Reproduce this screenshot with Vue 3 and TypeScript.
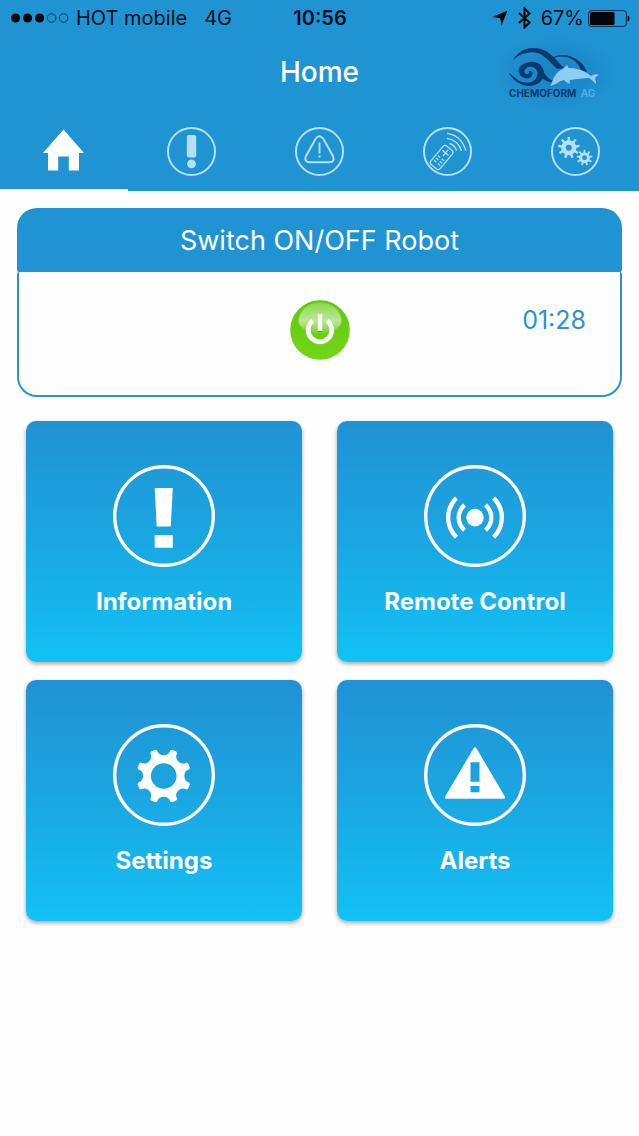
<script setup lang="ts">
import { ref } from 'vue'

type TabId = 'home' | 'info' | 'alerts' | 'remote' | 'settings'
type TileId = 'info' | 'remote' | 'settings' | 'alerts'

const tabs: { id: TabId; label: string }[] = [
  { id: 'home', label: 'Home' },
  { id: 'info', label: 'Information' },
  { id: 'alerts', label: 'Alerts' },
  { id: 'remote', label: 'Remote Control' },
  { id: 'settings', label: 'Settings' },
]

const tiles: { id: TileId; label: string }[] = [
  { id: 'info', label: 'Information' },
  { id: 'remote', label: 'Remote Control' },
  { id: 'settings', label: 'Settings' },
  { id: 'alerts', label: 'Alerts' },
]

const activeTab = ref<TabId>('home')
const robotOn = ref(true)

function polar(cx: number, cy: number, r: number, deg: number): string {
  const a = (deg * Math.PI) / 180
  return `${(cx + r * Math.cos(a)).toFixed(2)} ${(cy + r * Math.sin(a)).toFixed(2)}`
}

function hole(cx: number, cy: number, r: number): string {
  return `M${cx - r} ${cy}a${r} ${r} 0 1 0 ${2 * r} 0a${r} ${r} 0 1 0 ${-2 * r} 0Z`
}

/* Cog with square teeth */
function cog(cx: number, cy: number, outer: number, inner: number, bore: number, teeth: number): string {
  const step = 360 / teeth
  const points: string[] = []
  for (let i = 0; i < teeth; i++) {
    const a = i * step - 90
    points.push(
      polar(cx, cy, inner, a - step * 0.24),
      polar(cx, cy, outer, a - step * 0.16),
      polar(cx, cy, outer, a + step * 0.16),
      polar(cx, cy, inner, a + step * 0.24),
    )
  }
  return `M${points.join('L')}Z${hole(cx, cy, bore)}`
}

/* Cog with rounded scoops between its teeth */
function scoopedCog(cx: number, cy: number, outer: number, bore: number): string {
  let d = `M${polar(cx, cy, outer, 14.5)}`
  for (let i = 0; i < 8; i++) {
    const a = i * 45
    d += `L${polar(cx, cy, outer + 1, a + 18)}L${polar(cx, cy, outer + 1, a + 27)}L${polar(cx, cy, outer, a + 30.5)}`
    d += `A6.9 6.9 0 0 0 ${polar(cx, cy, outer, a + 59.5)}`
  }
  return `${d}Z${hole(cx, cy, bore)}`
}

const largeCog = cog(17.8, 20.7, 10.8, 7.6, 3, 9)
const smallCog = cog(33.5, 30.7, 8, 5.4, 2.4, 9)
const settingsCog = scoopedCog(50.7, 52, 26.5, 12.8)
</script>

<template>
  <div class="app">
    <header class="top">
      <div class="status">
        <div class="status-left">
          <svg class="signal" width="58" height="10" viewBox="0 0 58 10" aria-hidden="true">
            <circle cx="4.6" cy="5" r="4.6" />
            <circle cx="16.6" cy="5" r="4.6" />
            <circle cx="28.6" cy="5" r="4.6" />
            <circle class="empty" cx="40.6" cy="5" r="4.3" />
            <circle class="empty" cx="52.6" cy="5" r="4.3" />
          </svg>
          <span>HOT mobile</span>
          <span class="network">4G</span>
        </div>
        <span class="clock">10:56</span>
        <div class="status-right">
          <svg width="16" height="16" viewBox="0 0 16 16" aria-hidden="true">
            <path d="M15.5 .5L9.6 15.5L8.2 8.2L.5 7Z" />
          </svg>
          <svg class="bluetooth" width="13" height="22" viewBox="0 0 13 22" aria-hidden="true">
            <path d="M1 6L11.5 15.5L6.5 20.5V1.5L11.5 6.5L1 16" />
          </svg>
          <span>67%</span>
          <svg class="battery" width="42" height="17" viewBox="0 0 42 17" aria-hidden="true">
            <rect class="case" x=".6" y=".6" width="37.8" height="15.8" rx="3" />
            <rect x="2" y="2" width="24.5" height="13" rx="1.5" />
            <path d="M39.6 5.4Q41.6 6 41.6 8.5T39.6 11.6Z" />
          </svg>
        </div>
      </div>

      <div class="titlebar">
        <h1>Home</h1>
        <div class="logo">
          <svg width="92" height="40" viewBox="0 0 92 40" aria-hidden="true">
            <path class="navy" d="M4 12.500C8 4 17 -1 27 0C38 1 45 9 50 15L55 20L48 21L43 16C36 8 29 3 20 4.500C13 5.500 8 8 4 12.500Z" />
            <path class="navy" d="M43 10C50 5 62 6 70 13C75 17 77 21 78 24L72 22C69 14 62 9 54 8.500C50 8.300 47 9 43 10Z" />
            <path class="navy" d="M0 25C3 31 10 37 19 38C30 38 36 31 35 24C34 17 28 13 21 14C13 15 8 20 10 25C12 30 18 32 22 29C25 26 23 22 20 23C21 25 19 27 17 26C14 25 15 20 20 19C26 18 30 23 28 28C26 34 20 36 13 34C7 32 4 27 0 25Z" />
            <path class="navy" d="M30 16C35 24 37 31 45 33L41 34C34 33 32 28 30 23Z" />
            <path class="dolphin" d="M41 38C44 35 43 31 46 28C48 24 51 22 54 21L58 17C59 18 59 20 60 20C70 20 77 24 82 28C85 26 88 26 90 27C87 28 86 30 86 31C87 33 87 35 87 36C84 33 82 31 80 30C74 30 68 31 61 32C60 33 61 35 61 36C58 35 56 33 55 32C50 33 48 36 44 37Z" />
          </svg>
          <div class="brand">CHEMOFORM <span>AG</span></div>
        </div>
      </div>

      <nav class="tabs" aria-label="Sections">
        <button
          v-for="tab in tabs"
          :key="tab.id"
          type="button"
          class="tab"
          :class="{ active: tab.id === activeTab }"
          :aria-label="tab.label"
          @click="activeTab = tab.id"
        >
          <svg width="49" height="49" viewBox="0 0 49 49" aria-hidden="true">
            <path v-if="tab.id === 'home'" class="fill" d="M24.500 2.500L45 26H40V43.500H29.800V29.500H19.200V43.500H9V26H4Z" />
            <circle v-else class="line" cx="24.500" cy="24.500" r="23.500" />
            <template v-if="tab.id === 'info'">
              <rect class="fill" x="19.800" y="8" width="9.400" height="22.500" rx="2" />
              <circle class="fill" cx="24.500" cy="36.800" r="4.400" />
            </template>
            <template v-if="tab.id === 'alerts'">
              <path class="line" d="M20.500 12Q24.500 6.500 28.500 12L38.200 29.500Q40 35 34.500 35.200H14.500Q9 35 10.800 29.500Z" />
              <path class="line" d="M24.500 15.500V26.500M24.500 28.500V30.500" />
            </template>
            <template v-if="tab.id === 'remote'">
              <g class="thin" transform="translate(18.600 30.500) rotate(40)">
                <rect x="-6" y="-12" width="12" height="24" rx="2.500" />
                <path d="M0 -10V-2M-4 -6H4M-4 1H-1M1 1H4M-4 4H-1M1 4H4M-4 7H-1M1 7H4" />
              </g>
              <path class="thin" d="M24 6.300Q38 8 43 23.700M24 11.300Q35 13 38.500 23.700M26.500 16.500Q32 18 33.500 23.700" />
            </template>
            <template v-if="tab.id === 'settings'">
              <path class="fill" fill-rule="evenodd" :d="largeCog" />
              <path class="fill" fill-rule="evenodd" :d="smallCog" />
            </template>
          </svg>
        </button>
      </nav>
    </header>

    <main>
      <section class="card">
        <h2>Switch ON/OFF Robot</h2>
        <div class="card-body">
          <button
            type="button"
            class="power"
            aria-label="Robot power"
            :aria-pressed="robotOn"
            @click="robotOn = !robotOn"
          >
            <svg width="60" height="60" viewBox="0 0 60 60" aria-hidden="true">
              <defs>
                <linearGradient id="gloss" x1="0" y1="0" x2="0" y2="1">
                  <stop offset="0" stop-color="#fff" stop-opacity=".25" />
                  <stop offset=".6" stop-color="#fff" stop-opacity=".55" />
                  <stop offset="1" stop-color="#fff" stop-opacity=".1" />
                </linearGradient>
                <linearGradient id="green" x1="0" y1="0" x2="0" y2="1">
                  <stop offset="0" stop-color="#62c80e" />
                  <stop offset="1" stop-color="#74d518" />
                </linearGradient>
              </defs>
              <circle cx="30" cy="30" r="29.800" fill="url(#green)" />
              <path d="M8.500 20C10 9 19 2.500 30 2.500S50 9 51.500 20C52 26 45 33 30 33S8 26 8.500 20Z" fill="url(#gloss)" />
              <g class="power-shadow">
                <path d="M23 20.500A11.800 11.800 0 1 0 37 20.500M30 16V32" />
              </g>
              <g class="power-sign">
                <path d="M23 20.500A11.800 11.800 0 1 0 37 20.500M30 14V31" />
              </g>
            </svg>
          </button>
          <time class="timer">01:28</time>
        </div>
      </section>

      <div class="tiles">
        <button v-for="tile in tiles" :key="tile.id" type="button" class="tile">
          <svg width="102" height="102" viewBox="0 0 102 102" aria-hidden="true">
            <circle class="ring" cx="51" cy="51" r="49.300" />
            <path v-if="tile.id === 'info'" d="M41.700 23H59.800L57.800 61.500H43.700ZM41.700 70H59.800V82.700H41.700Z" />
            <template v-if="tile.id === 'remote'">
              <circle cx="51" cy="52.600" r="8.800" />
              <path class="wave" d="M32.400 33A27.400 27.400 0 0 0 32.400 72.200M69.600 33A27.400 27.400 0 0 1 69.600 72.200M40.500 40A16.600 16.600 0 0 0 40.500 65.200M61.500 40A16.600 16.600 0 0 1 61.500 65.200" />
            </template>
            <path v-if="tile.id === 'settings'" fill-rule="evenodd" :d="settingsCog" />
            <path
              v-if="tile.id === 'alerts'"
              fill-rule="evenodd"
              d="M49.400 24.500Q51 22 52.600 24.500L80.800 72.500Q81.500 74.700 79.500 74.700H22.500Q20.500 74.700 21.200 72.500ZM46.500 38.300V57.700H55.500V38.300ZM46.500 62V68.300H55.500V62Z"
            />
          </svg>
          <span>{{ tile.label }}</span>
        </button>
      </div>
    </main>
  </div>
</template>

<style>
body {
  margin: 0;
  background: #fefefe;
}
</style>

<style scoped>
.app {
  font-family: Inter, Roboto, "Liberation Sans", sans-serif;
  color: #fff;
}

button {
  margin: 0;
  padding: 0;
  border: 0;
  background: none;
  color: inherit;
  font: inherit;
  cursor: pointer;
}

svg {
  display: block;
}

.top {
  background: #2093d3;
}

.status {
  display: grid;
  grid-template-columns: 1fr auto 1fr;
  align-items: center;
  height: 36px;
  padding: 0 10px 0 11px;
  color: #06101c;
  font-size: 20px;
  line-height: 36px;
}

.status svg {
  fill: #03070c;
}

.status-left,
.status-right {
  display: flex;
  align-items: center;
}

.status-left {
  gap: 7px;
}

.status-right {
  justify-content: flex-end;
  gap: 10px;
}

.signal .empty {
  fill: none;
  stroke: #0f3f66;
  stroke-width: 1;
}

.network {
  margin-left: 10px;
}

.clock {
  font-weight: 600;
}

.status .bluetooth {
  fill: none;
  stroke: #03070c;
  stroke-width: 2;
}

.battery {
  margin-left: -4px;
}

.status-right {
  margin-right: -1px;
}

.status .battery .case {
  fill: none;
  stroke: #0b2c48;
  stroke-width: 1;
}

.status-right span {
  margin-right: -2px;
}

.titlebar {
  display: grid;
  grid-template-columns: 1fr auto 1fr;
  align-items: start;
  height: 76px;
}

h1 {
  grid-column: 2;
  margin: 0;
  font-size: 28px;
  font-weight: 500;
  line-height: 72px;
}

.logo {
  justify-self: end;
  margin-right: 22px;
  padding: 12px 16px;
  background: radial-gradient(closest-side, rgba(12, 100, 165, 0.32), rgba(12, 100, 165, 0.18) 60%, rgba(12, 100, 165, 0));
}

.navy {
  fill: #0b3a70;
}

.dolphin {
  fill: #8fcdf0;
}

.brand {
  color: #0b3a70;
  font-size: 10px;
  font-weight: 700;
  line-height: 10px;
  white-space: nowrap;
}

.brand span {
  margin-left: 2px;
  color: #58aadf;
}

.tabs {
  display: grid;
  grid-template-columns: repeat(5, 1fr);
}

.tab {
  display: flex;
  justify-content: center;
  padding: 15px 0 13px;
  border-bottom: 2px solid #2093d3;
  color: #b4e0f7;
}

.tab.active {
  border-color: #fff;
  color: #fff;
}

.tab .fill {
  fill: currentColor;
}

.tab .line {
  fill: none;
  stroke: currentColor;
  stroke-width: 2;
}

.tab .thin {
  fill: none;
  stroke: currentColor;
  stroke-width: 1.3;
}

main {
  padding: 17px 0 40px;
}

.card {
  margin: 0 17px;
}

h2 {
  margin: 0;
  padding-top: 2px;
  border-radius: 20px 20px 2px 2px;
  background: #2093d3;
  font-size: 27px;
  font-weight: 400;
  line-height: 62px;
  text-align: center;
}

.card-body {
  display: grid;
  grid-template-columns: 1fr auto 1fr;
  align-items: start;
  padding: 28px 34px 35px;
  border: 2px solid #2e93c8;
  border-top: 0;
  border-radius: 2px 2px 20px 20px;
}

.power {
  grid-column: 2;
  border-radius: 50%;
}

.power-sign,
.power-shadow {
  fill: none;
  stroke: #f6f6f2;
  stroke-width: 5;
}

.power-shadow {
  stroke: #3f8a10;
  opacity: 0.6;
}

.timer {
  justify-self: end;
  color: #2e93c8;
  font-size: 25px;
  line-height: 40px;
}

.tiles {
  display: grid;
  grid-template-columns: 1fr 1fr;
  gap: 18px 35px;
  padding: 24px 26px;
}

.tile {
  display: flex;
  flex-direction: column;
  align-items: center;
  gap: 19px;
  padding: 44px 0;
  border-radius: 10px;
  background: linear-gradient(#2192d3, #1aa7e2 50%, #12c1f5);
  box-shadow: 0 2px 4px rgba(0, 0, 0, 0.35);
  font-size: 24px;
  font-weight: 700;
  line-height: 32px;
}

.tile svg {
  fill: #fff;
}

.tile .ring {
  fill: none;
  stroke: #fff;
  stroke-width: 3.4;
}

.tile .wave {
  fill: none;
  stroke: #fff;
  stroke-width: 4.4;
}
</style>
